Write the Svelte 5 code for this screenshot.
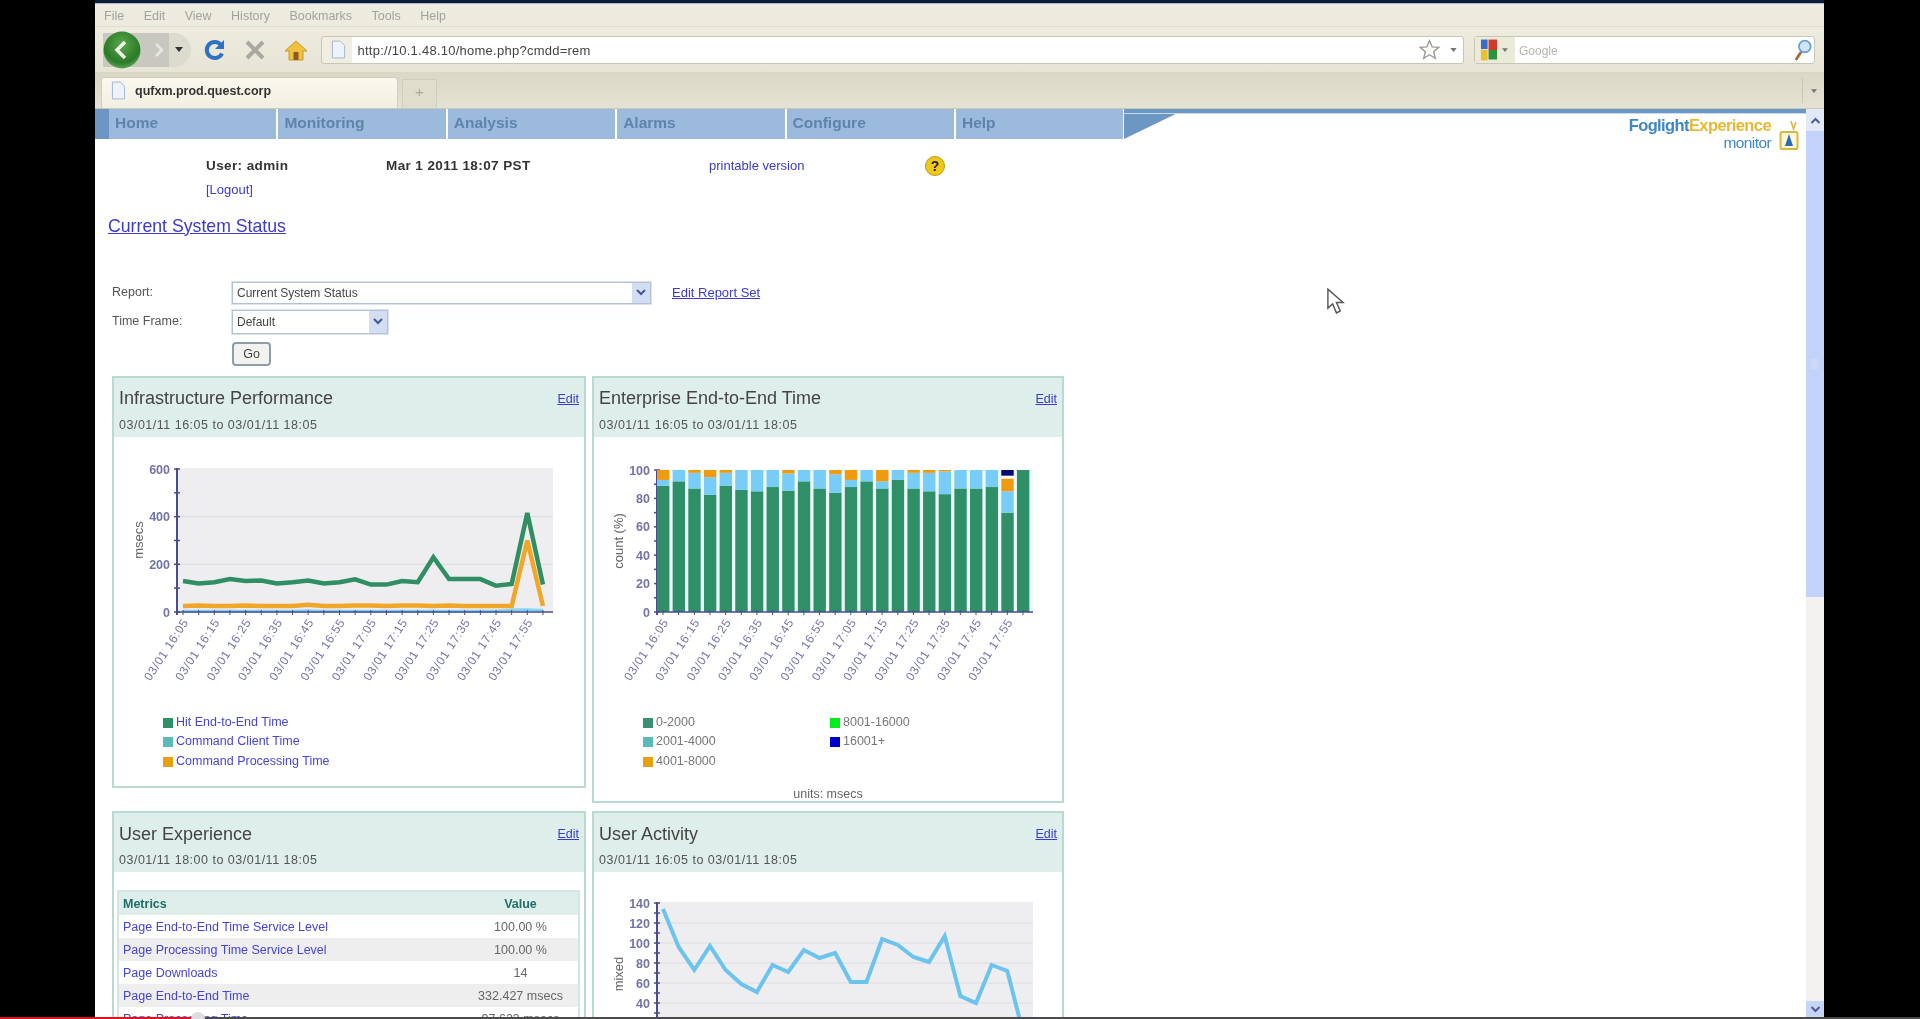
<script>
	const menus = ['File', 'Edit', 'View', 'History', 'Bookmarks', 'Tools', 'Help'];
	const navItems = ['Home', 'Monitoring', 'Analysis', 'Alarms', 'Configure', 'Help'];

	// chart geometry, relative to the panel's inner left edge
	const plotX = 63;
	const plotW = 376;
	const step = 15.65;
	const px = (i) => plotX + 6 + i * step;

	const times = ['16:05', '16:15', '16:25', '16:35', '16:45', '16:55', '17:05', '17:15', '17:25', '17:35', '17:45', '17:55'];

	const hitTime = [130, 120, 125, 138, 130, 132, 120, 125, 132, 120, 125, 137, 115, 115, 130, 125, 230, 138, 138, 138, 110, 118, 415, 115];
	const procTime = [25, 27, 25, 25, 27, 25, 25, 25, 30, 25, 25, 27, 27, 25, 27, 27, 25, 27, 25, 25, 25, 25, 300, 25];
	const clientTime = [3, 3, 3, 3, 3, 3, 3, 3, 5, 3, 3, 3, 3, 3, 3, 3, 3, 3, 3, 3, 3, 8, 9, 6];
	const activity = [134, 96, 73, 97, 73, 59, 51, 78, 71, 93, 85, 90, 61, 61, 104, 98, 86, 81, 107, 47, 40, 78, 72, 11];

	// green, blue, orange, gap, navy - stacked percent per sample
	const buckets = [
		[89, 4, 7, 0, 0], [92, 8, 0, 0, 0], [87, 11, 2, 0, 0], [82.5, 12.5, 5, 0, 0],
		[89, 9, 2, 0, 0], [86, 14, 0, 0, 0], [85, 15, 0, 0, 0], [88, 12, 0, 0, 0],
		[85.5, 12, 2.5, 0, 0], [92, 8, 0, 0, 0], [87, 13, 0, 0, 0], [84, 13, 3, 0, 0],
		[88, 5, 7, 0, 0], [92, 8, 0, 0, 0], [87, 5, 8, 0, 0], [93, 7, 0, 0, 0],
		[87, 11, 2, 0, 0], [85, 13, 2, 0, 0], [83, 16, 1, 0, 0], [87, 13, 0, 0, 0],
		[87, 13, 0, 0, 0], [88, 12, 0, 0, 0], [70, 15, 9, 2, 4], [100, 0, 0, 0, 0]
	];
	const bucketColors = ['#2f9068', '#78cdf8', '#f09a10', '#ffffff', '#000a70'];

	function stackBars(row) {
		let sum = 0;
		return row.map((v, c) => {
			const seg = { from: sum, value: v, color: bucketColors[c] };
			sum += v;
			return seg;
		});
	}

	const line = (data, y0, scale) => data.map((v, i) => `${px(i)},${y0 - v * scale}`).join(' ');

	const hitLegend = [
		['#2f9068', 'Hit End-to-End Time'],
		['#5abcb8', 'Command Client Time'],
		['#e8a010', 'Command Processing Time']
	];
	const bucketLegend = [
		['#3a9070', '0-2000'],
		['#00ee22', '8001-16000'],
		['#5abcb8', '2001-4000'],
		['#0000cc', '16001+'],
		['#e8a010', '4001-8000']
	];
	const metrics = [
		['Page End-to-End Time Service Level', '100.00 %'],
		['Page Processing Time Service Level', '100.00 %'],
		['Page Downloads', '14'],
		['Page End-to-End Time', '332.427 msecs'],
		['Page Processing Time', '97.623 msecs']
	];
</script>

{#snippet axes(y0, pxPerUnit, max, major, minor, top)}
	<rect x={plotX} y={top} width={plotW} height={y0 - top} fill="#eeeef0" />
	{#each Array.from({ length: Math.floor(max / minor) + 1 }, (_, k) => k * minor) as v}
		{#if v % major === 0}
			{#if v > 0 && v < max}
				<line x1={plotX} x2={plotX + plotW} y1={y0 - v * pxPerUnit} y2={y0 - v * pxPerUnit} stroke="#dcdcde" />
			{/if}
			<text class="tick" x="56" y={y0 - v * pxPerUnit + 4.5} text-anchor="end">{v}</text>
		{/if}
		<line x1={plotX - 3} x2={plotX + 3} y1={y0 - v * pxPerUnit} y2={y0 - v * pxPerUnit} stroke="#4b4b8f" stroke-width="1.5" />
	{/each}
	<line x1={plotX} x2={plotX} y1={top} y2={y0 + 3} stroke="#4b4b8f" stroke-width="2" />
{/snippet}

{#snippet timeAxis(y0)}
	<line x1={plotX} x2={plotX + plotW} y1={y0} y2={y0} stroke="#4b4b8f" stroke-width="1.5" />
	{#each hitTime as _, i}
		<line x1={px(i)} x2={px(i)} y1={y0 - 2} y2={y0 + 3} stroke="#4b4b8f" />
	{/each}
	{#each times as t, i}
		<text class="tick stamp" text-anchor="end" transform="translate({px(i * 2) + 6} {y0 + 10}) rotate(-57)">03/01 {t}</text>
	{/each}
{/snippet}

{#snippet panelHead(title, range)}
	<header class="panel-head">
		<div class="panel-title">
			<h2>{title}</h2>
			<a href="#edit" class="edit">Edit</a>
		</div>
		<p>{range}</p>
	</header>
{/snippet}

<div class="stage">
	<div class="viewport">
		<div class="window">
			<div class="topline"></div>

			<div class="menubar">
				{#each menus as m}
					<span>{m}</span>
				{/each}
			</div>

			<div class="toolbar">
				<div class="backforward">
					<span class="back">
						<svg viewBox="0 0 38 38" width="38" height="38">
							<defs>
								<radialGradient id="bk" cx="50%" cy="35%" r="70%">
									<stop offset="0" stop-color="#5aa84a" />
									<stop offset="0.7" stop-color="#2a7a28" />
									<stop offset="1" stop-color="#6fae60" />
								</radialGradient>
							</defs>
							<circle cx="19" cy="19" r="18.5" fill="url(#bk)" />
							<path d="M22 11 L14 19 L22 27" fill="none" stroke="#f2f6ea" stroke-width="3.5" />
						</svg>
					</span>
					<svg class="fwd" viewBox="0 0 12 16" width="12" height="16"><path d="M3 2 L9 8 L3 14" fill="none" stroke="#e8e8e0" stroke-width="2.5" /></svg>
					<svg class="drop" viewBox="0 0 8 5" width="8" height="5"><path d="M0 0 H8 L4 5 Z" fill="#333" /></svg>
				</div>
				<svg class="tool" viewBox="0 0 24 24" width="24" height="24">
					<path d="M19 15.5 A8 8 0 1 1 18 7" fill="none" stroke="#2f6fc4" stroke-width="4" />
					<path d="M21 2 V11 H12 Z" fill="#2f6fc4" />
				</svg>
				<svg class="tool" viewBox="0 0 24 24" width="24" height="24">
					<path d="M4 4 L20 20 M20 4 L4 20" stroke="#a8a89e" stroke-width="4" />
				</svg>
				<svg class="tool" viewBox="0 0 24 24" width="24" height="24">
					<path d="M12 3 L1 13 H5 V22 H19 V13 H23 Z" fill="#f0c040" stroke="#c89a28" />
					<rect x="9.5" y="14" width="5" height="8" fill="#8a5a20" />
				</svg>
				<div class="urlbar">
					<svg class="pageicon" viewBox="0 0 16 20" width="15" height="19">
						<path d="M1.5 1 H10 L14.5 5.5 V19 H1.5 Z" fill="#eef3fb" stroke="#9db4d0" />
					</svg>
					<span class="url">http://10.1.48.10/home.php?cmdd=rem</span>
					<svg class="star" viewBox="0 0 24 24" width="21" height="21">
						<path d="M12 2 L15 9 L22.5 9.6 L16.8 14.5 L18.6 22 L12 18 L5.4 22 L7.2 14.5 L1.5 9.6 L9 9 Z" fill="#fff" stroke="#9a9a94" stroke-width="1.6" />
					</svg>
					<svg viewBox="0 0 8 5" width="7" height="4"><path d="M0 0 H8 L4 5 Z" fill="#77776f" /></svg>
				</div>
				<div class="searchbar">
					<span class="engine">
						<svg viewBox="0 0 20 22" width="19" height="22">
							<rect x="1" y="0" width="7" height="10" fill="#3a6cc8" />
							<rect x="9" y="0" width="9" height="11" fill="#d03a2a" />
							<rect x="1" y="11" width="7" height="11" fill="#e8c030" />
							<rect x="9" y="11" width="9" height="10" fill="#2f9040" />
						</svg>
						<svg viewBox="0 0 8 5" width="6" height="4"><path d="M0 0 H8 L4 5 Z" fill="#77776f" /></svg>
					</span>
					<span class="engine-name">Google</span>
					<svg viewBox="0 0 20 26" width="18" height="24">
						<path d="M8 15 L2 24" stroke="#a06a3a" stroke-width="3" />
						<circle cx="12" cy="9" r="6.5" fill="#cfe6fa" stroke="#6aa0d4" stroke-width="2" />
					</svg>
				</div>
			</div>

			<div class="tabstrip">
				<div class="tab">
					<svg viewBox="0 0 16 20" width="15" height="19">
						<path d="M1.5 1 H10 L14.5 5.5 V19 H1.5 Z" fill="#eef3fb" stroke="#9db4d0" />
					</svg>
					<span>qufxm.prod.quest.corp</span>
				</div>
				<div class="newtab">+</div>
				<div class="alltabs"><svg viewBox="0 0 8 5" width="6" height="4"><path d="M0 0 H8 L4 5 Z" fill="#77776f" /></svg></div>
			</div>

			<div class="page">
				<div class="content">
					<div class="navband">
						<span class="stub"></span>
						{#each navItems as item}
							<span class="navitem">{item}</span>
						{/each}
						<svg class="wedge" viewBox="0 0 62 30" width="62" height="30"><path d="M0 0 H62 L0 30 Z" fill="#6d97c3" /></svg>
						<div class="navrest">
							<div class="logo">
								<div class="logo-text">
									<div class="logo-name"><span class="fog">Foglight</span><span class="exp">Experience</span></div>
									<div class="logo-sub">monitor</div>
								</div>
								<svg viewBox="0 0 20 32" width="20" height="32">
									<path d="M12 2 L14.5 10 L17 3" fill="none" stroke="#d8b840" stroke-width="1.6" />
									<rect x="1.5" y="13" width="17" height="17" rx="1.5" fill="#fdf6d8" stroke="#d8b840" stroke-width="2" />
									<path d="M10 15 L14 27 H6 Z" fill="#2a6cb0" />
								</svg>
							</div>
						</div>
					</div>

					<div class="userbar">
						<strong>User: admin</strong>
						<strong>Mar 1 2011 18:07 PST</strong>
						<a href="#print" class="plain">printable version</a>
						<span class="help">?</span>
						<a href="#logout" class="plain logout">[Logout]</a>
					</div>

					<a href="#status" class="status-title">Current System Status</a>

					<div class="reportform">
						<label for="report-sel">Report:</label>
						<div class="field-row">
							<div id="report-sel" class="select wide"><span>Current System Status</span><i><svg viewBox="0 0 10 7" width="10" height="7"><path d="M1 1 L5 5 L9 1" fill="none" stroke="#3f5a90" stroke-width="2" /></svg></i></div>
							<a href="#edit-set" class="editset">Edit Report Set</a>
						</div>
						<label for="frame-sel">Time Frame:</label>
						<div class="select narrow" id="frame-sel"><span>Default</span><i><svg viewBox="0 0 10 7" width="10" height="7"><path d="M1 1 L5 5 L9 1" fill="none" stroke="#3f5a90" stroke-width="2" /></svg></i></div>
						<span></span>
						<button type="button">Go</button>
					</div>

					<div class="panels">
						<section class="panel">
							{@render panelHead('Infrastructure Performance', '03/01/11 16:05 to 03/01/11 18:05')}
							<svg class="chart" width="470" height="276">
								{@render axes(175, 143 / 600, 600, 200, 100, 31)}
								<text class="ylabel" transform="translate(29 103) rotate(-90)" text-anchor="middle">msecs</text>
								<polyline points={line(clientTime, 175, 143 / 600)} fill="none" stroke="#7fd4f4" stroke-width="3" />
								<polyline points={line(hitTime, 175, 143 / 600)} fill="none" stroke="#2f8f63" stroke-width="4.5" />
								<polyline points={line(procTime, 175, 143 / 600)} fill="none" stroke="#f2a628" stroke-width="4.5" />
								{@render timeAxis(175)}
							</svg>
							<ul class="legend">
								{#each hitLegend as [color, label]}
									<li><i style="background:{color}"></i><a href="#series">{label}</a></li>
								{/each}
							</ul>
						</section>

						<section class="panel">
							{@render panelHead('Enterprise End-to-End Time', '03/01/11 16:05 to 03/01/11 18:05')}
							<svg class="chart" width="470" height="276">
								<text class="ylabel" transform="translate(29 104) rotate(-90)" text-anchor="middle">count (%)</text>
								{@render axes(175, 1.42, 100, 20, 10, 33)}
								<rect x={plotX} y="33" width={plotW} height="142" fill="#eefafa" />
								{#each buckets as row, i}
									{#each stackBars(row) as seg}
										{#if seg.value > 0}
											<rect x={px(i) - 6} y={175 - (seg.from + seg.value) * 1.42} width="12.4" height={seg.value * 1.42} fill={seg.color} />
										{/if}
									{/each}
								{/each}
								{@render timeAxis(175)}
							</svg>
							<ul class="legend two">
								{#each bucketLegend as [color, label]}
									<li><i style="background:{color}"></i><span>{label}</span></li>
								{/each}
							</ul>
							<div class="units">units: msecs</div>
						</section>

						<section class="panel">
							{@render panelHead('User Experience', '03/01/11 18:00 to 03/01/11 18:05')}
							<table>
								<thead>
									<tr><th class="name">Metrics</th><th>Value</th></tr>
								</thead>
								<tbody>
									{#each metrics as [name, value]}
										<tr>
											<td class="name"><a href="#metric">{name}</a></td>
											<td class="val">{value}</td>
										</tr>
									{/each}
								</tbody>
							</table>
						</section>

						<section class="panel">
							{@render panelHead('User Activity', '03/01/11 16:05 to 03/01/11 18:05')}
							<svg class="chart" width="470" height="180">
								{@render axes(171, 1, 140, 20, 10, 30)}
								<text class="ylabel" transform="translate(29 102) rotate(-90)" text-anchor="middle">mixed</text>
								<polyline points={line(activity, 171, 1)} fill="none" stroke="#6cc4ee" stroke-width="4" />
							</svg>
						</section>
					</div>
				</div>

				<aside class="scrollbar">
					<div class="sb-up"><svg viewBox="0 0 10 7" width="11" height="7"><path d="M1 6 L5 2 L9 6" fill="none" stroke="#4a5f90" stroke-width="2" /></svg></div>
					<div class="sb-thumb"><span></span></div>
					<div class="sb-track"></div>
					<div class="sb-down"><svg viewBox="0 0 10 7" width="11" height="7"><path d="M1 1 L5 5 L9 1" fill="none" stroke="#4a5f90" stroke-width="2" /></svg></div>
				</aside>

				<svg class="cursor" viewBox="0 0 20 28" width="19" height="27">
					<path d="M2 1 V21 L7 16.5 L11 26 L15 24 L11 15 H18 Z" fill="#fff" stroke="#555" stroke-width="1.5" />
				</svg>
			</div>
		</div>
	</div>
	<div class="progress">
		<span class="played"></span>
		<span class="knob"></span>
	</div>
</div>

<style>
	:global(body) {
		margin: 0;
		background: #000;
	}
	.stage {
		width: 1920px;
		height: 1019px;
		display: flex;
		flex-direction: column;
		overflow: hidden;
		background: #000;
		font-family: 'Liberation Sans', Arial, sans-serif;
		color: #333;
	}
	.viewport {
		height: 1017px;
		padding: 0 96px 0 95px;
		overflow: hidden;
	}
	.window {
		height: 1017px;
		display: flex;
		flex-direction: column;
		overflow: hidden;
		filter: blur(0.7px);
	}
	.topline {
		height: 3px;
		background: #0d1c33;
		border-bottom: 1px solid #aab8e0;
		flex: none;
	}
	.menubar {
		height: 23px;
		flex: none;
		display: flex;
		align-items: center;
		gap: 19.5px;
		padding: 2px 0 0 9px;
		box-sizing: border-box;
		background: linear-gradient(#eeecdf, #ecebdd);
		border-bottom: 1px solid #e0dece;
		font-size: 12.5px;
		color: #a3a399;
	}
	.toolbar {
		height: 45px;
		flex: none;
		display: flex;
		align-items: center;
		background: linear-gradient(#eeecdf, #e6e4d4);
		padding: 0 9px 0 8px;
		box-sizing: border-box;
	}
	.backforward {
		width: 88px;
		height: 34px;
		position: relative;
		border-radius: 0 17px 17px 0;
		background: linear-gradient(90deg, #c8c8c0 0 75%, #dcdbd0 75%);
		margin-right: -5px;
		display: flex;
		align-items: center;
		flex: none;
	}
	.back {
		display: block;
		width: 38px;
		height: 38px;
		margin: -2px 0 -2px 0;
	}
	.fwd {
		margin-left: 12px;
	}
	.drop {
		margin-left: 10px;
	}
	.tool {
		flex: none;
		margin-left: 16.5px;
	}
	.urlbar {
		flex: 1;
		height: 28px;
		margin-left: 13px;
		display: flex;
		align-items: center;
		gap: 8px;
		padding: 0 6px 0 9px;
		background: linear-gradient(90deg, #f0eee2 0 30px, #fff 30px);
		border: 1px solid #c8c6b4;
		border-radius: 3px;
		box-sizing: border-box;
	}
	.url {
		flex: 1;
		font-size: 13px;
		letter-spacing: 0.25px;
		color: #444;
		padding: 1px 0 0 4px;
	}
	.star {
		margin-right: 2px;
	}
	.searchbar {
		width: 341px;
		height: 28px;
		margin-left: 10px;
		flex: none;
		display: flex;
		align-items: center;
		background: #fff;
		border: 1px solid #c8c6b4;
		border-radius: 3px;
		box-sizing: border-box;
		padding-right: 2px;
	}
	.engine {
		display: flex;
		align-items: center;
		gap: 3px;
		height: 100%;
		width: 40px;
		padding-left: 5px;
		box-sizing: border-box;
		background: #ecead9;
		flex: none;
	}
	.engine-name {
		flex: 1;
		font-size: 12px;
		color: #b4b4b0;
		padding: 2px 0 0 4px;
	}
	.tabstrip {
		height: 37px;
		flex: none;
		display: flex;
		align-items: flex-end;
		padding-left: 6px;
		background: linear-gradient(#d9d7c6, #e4e2d2);
		border-bottom: 1px solid #c9c7b6;
		box-sizing: border-box;
	}
	.tab {
		width: 297px;
		height: 31px;
		flex: none;
		box-sizing: border-box;
		display: flex;
		align-items: center;
		gap: 9px;
		padding: 0 0 5px 9px;
		background: linear-gradient(#fbf9ee, #f1efe1);
		border: 1px solid #d0cebc;
		border-bottom: 0;
		border-radius: 3px 3px 0 0;
		font-size: 12.5px;
		font-weight: bold;
		color: #333;
	}
	.newtab {
		width: 35px;
		height: 29px;
		margin-left: 4px;
		flex: none;
		text-align: center;
		line-height: 23px;
		font-size: 15px;
		color: #aaa99a;
		background: #dfddcc;
		border: 1px solid #cfcdbb;
		border-bottom: 0;
		box-sizing: border-box;
	}
	.alltabs {
		margin-left: auto;
		width: 22px;
		height: 25px;
		margin-bottom: 5px;
		display: flex;
		align-items: center;
		justify-content: center;
		border-left: 1px solid #c8c6b4;
		box-sizing: border-box;
	}
	.page {
		flex: 1;
		min-height: 0;
		display: flex;
		position: relative;
		background: #fff;
	}
	.content {
		flex: 1;
		min-width: 0;
		overflow: hidden;
	}
	.navband {
		display: flex;
		align-items: flex-start;
		height: 44.5px;
	}
	.stub {
		width: 14px;
		height: 30px;
		background: #6d97c3;
		flex: none;
	}
	.navitem {
		width: 167.4px;
		height: 30px;
		flex: none;
		box-sizing: border-box;
		margin-right: 2px;
		padding-left: 6px;
		line-height: 28px;
		background: #9bbadc;
		font-size: 15.5px;
		font-weight: bold;
		color: #5f83ac;
	}
	.wedge {
		flex: none;
		margin-left: -1px;
	}
	.navrest {
		flex: 1;
		margin-left: -62px;
		border-top: 4px solid #6d97c3;
		box-shadow: inset 0 1px 0 #c8dcf0;
	}
	.logo {
		display: flex;
		justify-content: flex-end;
		align-items: flex-end;
		gap: 8px;
		padding-right: 7px;
		margin-top: 3px;
	}
	.logo-text {
		text-align: right;
		letter-spacing: -0.6px;
	}
	.logo-name {
		font-size: 16.5px;
		font-weight: bold;
		line-height: 18px;
	}
	.fog {
		color: #3f87c3;
	}
	.exp {
		color: #e8b830;
	}
	.logo-sub {
		font-size: 15.5px;
		color: #3f87c3;
		line-height: 17px;
	}
	.userbar {
		display: grid;
		grid-template-columns: 180px 323px 216px 24px;
		align-items: center;
		grid-auto-rows: 24px;
		padding: 0 0 0 111px;
		font-size: 13.5px;
	}
	.userbar strong {
		color: #333;
		letter-spacing: 0.4px;
	}
	.plain {
		color: #3a3acc;
		text-decoration: none;
		font-size: 13px;
	}
	.logout {
		grid-column: 1;
		grid-row: 2;
	}
	.help {
		width: 20px;
		height: 20px;
		border-radius: 50%;
		background: #f0c818;
		border: 1px solid #b89a10;
		box-sizing: border-box;
		text-align: center;
		font-size: 14px;
		line-height: 18px;
		font-weight: bold;
		color: #222;
	}
	.status-title {
		display: block;
		margin: 13px 0 0 13px;
		font-size: 17.7px;
		line-height: 22px;
		color: #3a3acc;
		width: max-content;
	}
	.reportform {
		display: grid;
		grid-template-columns: 120px 1fr;
		grid-template-rows: 24px 24px 30px;
		row-gap: 5px;
		margin: 44px 0 7.4px 17px;
		font-size: 12.5px;
		color: #555;
		align-items: center;
	}
	.reportform label {
		align-self: start;
		padding-top: 4px;
	}
	.field-row {
		display: flex;
		align-items: center;
		gap: 21px;
	}
	.select {
		height: 22px;
		display: flex;
		align-items: center;
		justify-content: space-between;
		box-sizing: border-box;
		border: 1px solid #b4c0d8;
		padding-left: 4px;
		color: #444;
		font-size: 12px;
		background: #fff;
		outline: 1px solid #dde3ef;
	}
	.select i {
		width: 18px;
		height: 100%;
		display: flex;
		align-items: center;
		justify-content: center;
		background: #d4def2;
	}
	.wide {
		width: 419px;
	}
	.narrow {
		width: 156px;
		height: 24px;
	}
	.editset {
		color: #3a3acc;
		font-size: 13px;
	}
	.reportform button {
		width: 39px;
		height: 24px;
		padding: 0;
		font: 12.5px 'Liberation Sans', Arial, sans-serif;
		color: #444;
		background: #f2f2ee;
		border: 2px solid #8f9cae;
		border-radius: 4px;
	}
	.panels {
		display: grid;
		grid-template-columns: 474px 472px;
		column-gap: 6px;
		row-gap: 8px;
		align-items: start;
		margin-left: 17px;
	}
	.panel {
		border: 2px solid #b8dad2;
		box-sizing: border-box;
		background: #fff;
	}
	.panel-head {
		height: 59px;
		box-sizing: border-box;
		padding: 10px 5px 0 5px;
		background: #deeeeb;
	}
	.panel-title {
		display: flex;
		justify-content: space-between;
		align-items: center;
		height: 22px;
	}
	.panel-head h2 {
		margin: 0;
		font-size: 18px;
		font-weight: normal;
		color: #444;
	}
	.edit {
		font-size: 12.5px;
		color: #3a3acc;
	}
	.panel-head p {
		margin: 8px 0 0;
		font-size: 12.5px;
		letter-spacing: 0.5px;
		color: #555;
	}
	.chart {
		display: block;
	}
	.tick {
		font-size: 12.5px;
		fill: #5a5a9a;
		font-weight: bold;
		opacity: 0.85;
	}
	.stamp {
		font-size: 12px;
		font-weight: normal;
		letter-spacing: 0.7px;
	}
	.ylabel {
		font-size: 13px;
		fill: #666;
	}
	.legend {
		list-style: none;
		margin: 0;
		padding: 0 0 15px 49px;
		font-size: 12.5px;
		line-height: 19.5px;
	}
	.legend li {
		display: flex;
		align-items: center;
		gap: 3px;
	}
	.legend i {
		width: 10px;
		height: 10px;
		flex: none;
	}
	.legend a {
		color: #4444dd;
		text-decoration: none;
	}
	.legend.two {
		display: grid;
		grid-template-columns: 187px 1fr;
		color: #777;
		padding-bottom: 0;
	}
	.units {
		text-align: center;
		font-size: 12.5px;
		color: #666;
		margin-top: 17px;
		line-height: 13px;
	}
	table {
		margin: 18px 3px 0;
		width: 463px;
		border-collapse: collapse;
		font-size: 12.5px;
		border: 2px solid #d3e6e2;
	}
	th {
		height: 23px;
		background: #deeeeb;
		color: #1f6f66;
		font-weight: bold;
		padding: 0;
	}
	td {
		height: 23px;
		padding: 0;
		text-align: center;
		color: #666;
	}
	.name {
		text-align: left;
		padding-left: 4px;
		width: 340px;
	}
	td a {
		color: #4444dd;
		text-decoration: none;
	}
	tbody tr:nth-child(even) {
		background: #eeeeee;
	}
	.scrollbar {
		width: 18px;
		flex: none;
		display: flex;
		flex-direction: column;
		background: #f4f2f0;
	}
	.sb-up {
		height: 22px;
		display: flex;
		align-items: center;
		justify-content: center;
		background: #e2e8f8;
		flex: none;
	}
	.sb-thumb {
		height: 466px;
		flex: none;
		background: #c2d2f8;
		display: flex;
		align-items: center;
		justify-content: center;
	}
	.sb-thumb span {
		width: 8px;
		height: 10px;
		background: #ccd8f8;
	}
	.sb-track {
		flex: 1;
	}
	.sb-down {
		height: 16px;
		display: flex;
		align-items: center;
		justify-content: center;
		background: #c6d4f8;
		flex: none;
	}
	.cursor {
		position: absolute;
		left: 1231px;
		top: 179px;
	}
	.progress {
		height: 2px;
		position: relative;
		background: #4a4a4a;
		flex: none;
	}
	.played {
		display: block;
		width: 192px;
		height: 2px;
		background: #e0121c;
	}
	.knob {
		position: absolute;
		left: 191px;
		top: -5px;
		width: 14px;
		height: 14px;
		border-radius: 50%;
		background: #ddd;
	}
</style>
